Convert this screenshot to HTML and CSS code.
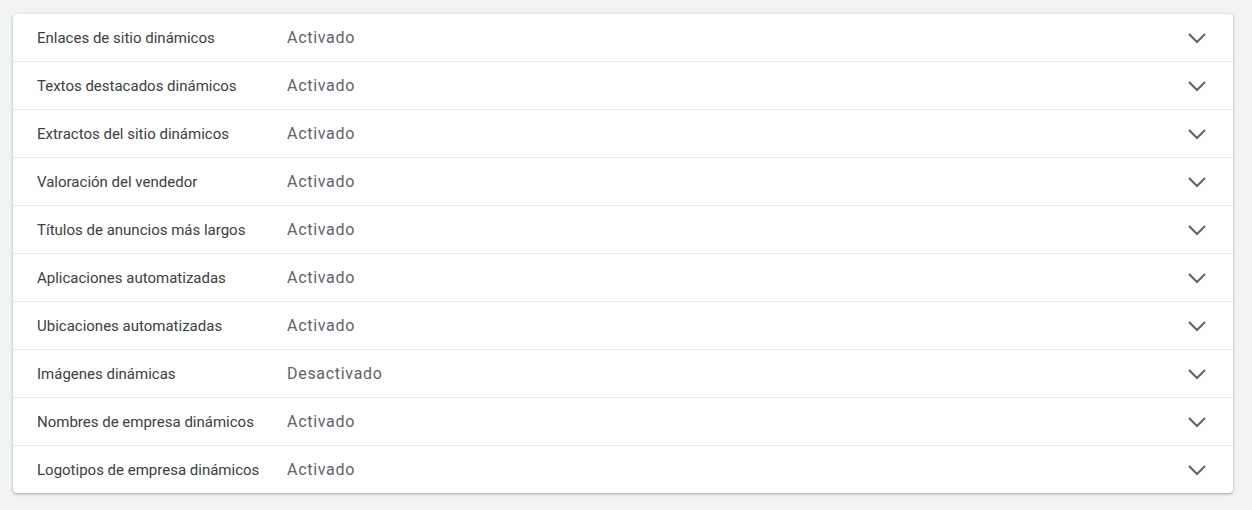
FILE: index.html
```html
<!DOCTYPE html>
<html lang="es">
<head>
    <meta charset="UTF-8">
    <meta name="viewport" content="width=device-width, initial-scale=1.0">
    <title>Recursos dinámicos</title>
    <link rel="stylesheet" href="styles.css">
</head>
<body class="page">
    <div class="panels">
        <div class="panel">
            <span class="panel-title">Enlaces de sitio dinámicos</span>
            <span class="panel-status">Activado</span>
            <svg class="chevron" viewBox="0 0 20 12"><polyline points="2,2 10,10 18,2"/></svg>
        </div>
        <div class="panel">
            <span class="panel-title">Textos destacados dinámicos</span>
            <span class="panel-status">Activado</span>
            <svg class="chevron" viewBox="0 0 20 12"><polyline points="2,2 10,10 18,2"/></svg>
        </div>
        <div class="panel">
            <span class="panel-title">Extractos del sitio dinámicos</span>
            <span class="panel-status">Activado</span>
            <svg class="chevron" viewBox="0 0 20 12"><polyline points="2,2 10,10 18,2"/></svg>
        </div>
        <div class="panel">
            <span class="panel-title">Valoración del vendedor</span>
            <span class="panel-status">Activado</span>
            <svg class="chevron" viewBox="0 0 20 12"><polyline points="2,2 10,10 18,2"/></svg>
        </div>
        <div class="panel">
            <span class="panel-title">Títulos de anuncios más largos</span>
            <span class="panel-status">Activado</span>
            <svg class="chevron" viewBox="0 0 20 12"><polyline points="2,2 10,10 18,2"/></svg>
        </div>
        <div class="panel">
            <span class="panel-title">Aplicaciones automatizadas</span>
            <span class="panel-status">Activado</span>
            <svg class="chevron" viewBox="0 0 20 12"><polyline points="2,2 10,10 18,2"/></svg>
        </div>
        <div class="panel">
            <span class="panel-title">Ubicaciones automatizadas</span>
            <span class="panel-status">Activado</span>
            <svg class="chevron" viewBox="0 0 20 12"><polyline points="2,2 10,10 18,2"/></svg>
        </div>
        <div class="panel">
            <span class="panel-title">Imágenes dinámicas</span>
            <span class="panel-status">Desactivado</span>
            <svg class="chevron" viewBox="0 0 20 12"><polyline points="2,2 10,10 18,2"/></svg>
        </div>
        <div class="panel">
            <span class="panel-title">Nombres de empresa dinámicos</span>
            <span class="panel-status">Activado</span>
            <svg class="chevron" viewBox="0 0 20 12"><polyline points="2,2 10,10 18,2"/></svg>
        </div>
        <div class="panel">
            <span class="panel-title">Logotipos de empresa dinámicos</span>
            <span class="panel-status">Activado</span>
            <svg class="chevron" viewBox="0 0 20 12"><polyline points="2,2 10,10 18,2"/></svg>
        </div>
    </div>
</body>
</html>
```

FILE: styles.css
```css
.page {
    margin: 0;
    padding: 14px 19px 16px 13px;
    background-color: #f1f3f4;
    font-family: Roboto, Arial, sans-serif;
}

.panels {
    background-color: #fff;
    border-radius: 4px;
    box-shadow: 0 1px 2px rgba(60, 64, 67, 0.3), 0 1px 3px 1px rgba(60, 64, 67, 0.12);
}

.panel {
    display: flex;
    align-items: center;
    height: 47px;
    padding: 0 26px 0 24px;
    border-top: 1px solid #e8eaed;
}

.panel:first-child {
    border-top: none;
}

.panel-title {
    width: 250px;
    font-size: 15px;
    color: #3c4043;
}

.panel-status {
    flex: 1;
    font-size: 16px;
    color: #5f6368;
    letter-spacing: 0.7px;
}

.chevron {
    width: 20px;
    height: 12px;
    fill: none;
    stroke: #5f6368;
    stroke-width: 2;
}
```
